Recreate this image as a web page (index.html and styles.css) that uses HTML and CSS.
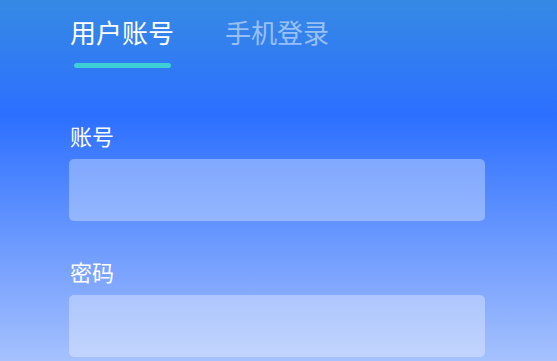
FILE: index.html
```html
<!DOCTYPE html>
<html lang="zh-CN">
<head>
<meta charset="utf-8">
<title>登录</title>
<link rel="stylesheet" href="styles.css">
</head>
<body>
<div class="page">
  <div class="tabs">
    <div class="tab active">
      <span class="tab-text">用户账号</span>
      <span class="tab-bar"></span>
    </div>
    <div class="tab">
      <span class="tab-text">手机登录</span>
    </div>
  </div>
  <form class="form">
    <div class="field">
      <label class="label">账号</label>
      <input class="input" type="text">
    </div>
    <div class="field">
      <label class="label">密码</label>
      <input class="input" type="password">
    </div>
  </form>
</div>
</body>
</html>
```

FILE: styles.css
```css
html, body {
  margin: 0;
  padding: 0;
}
body {
  min-height: 361px;
  background: linear-gradient(180deg, #368ae4 0%, #2c6fff 32%, #a6c1fd 100%);
  font-family: "Noto Sans CJK SC", "Noto Sans", sans-serif;
  color: #ffffff;
  overflow: hidden;
}
.page {
  box-sizing: border-box;
  height: 361px;
  padding: 18.5px 72px 0 69px;
}
.tabs {
  display: flex;
  gap: 51px;
  margin-left: 1px;
}
.tab {
  display: flex;
  flex-direction: column;
  align-items: center;
}
.tab-text {
  font-size: 26px;
  line-height: 26px;
  color: rgba(255, 255, 255, 0.5);
}
.tab.active .tab-text {
  color: #ffffff;
}
.tab-bar {
  width: 97px;
  height: 5px;
  margin-top: 18.5px;
  border-radius: 3px;
  background: #3dcfd5;
}
.form {
  display: flex;
  flex-direction: column;
  gap: 39px;
  margin-top: 56px;
}
.field {
  display: flex;
  flex-direction: column;
}
.label {
  font-size: 22px;
  line-height: 22px;
  margin-left: 1px;
  margin-bottom: 13px;
}
.input {
  box-sizing: border-box;
  width: 416px;
  height: 62px;
  border: none;
  outline: none;
  border-radius: 5px;
  background: rgba(255, 255, 255, 0.33);
  padding: 0 14px;
  font-family: inherit;
  font-size: 18px;
  color: #ffffff;
}
```
